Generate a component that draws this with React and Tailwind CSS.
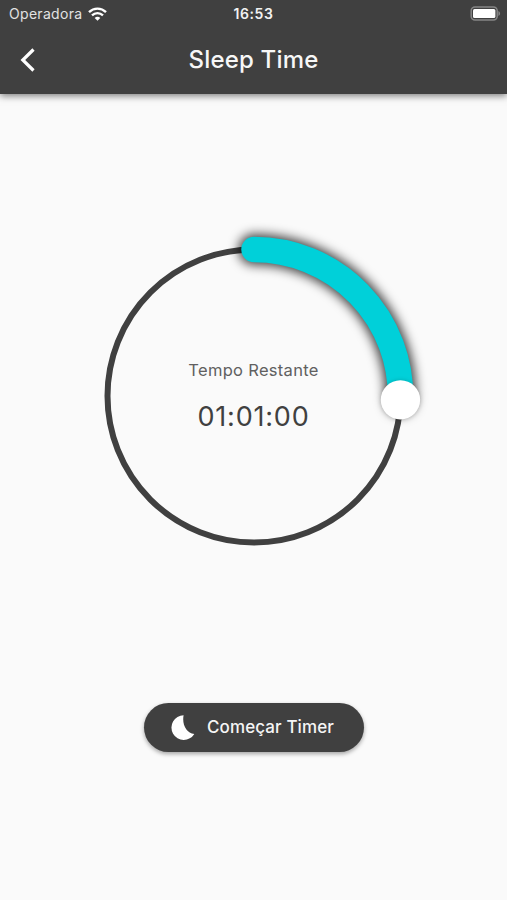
import { useState } from "react";

const TOTAL_MINUTES = 240;
const CENTER = 170;
const RADIUS = 146.5;

const WifiIcon = () => (
  <svg className="w-[19px] h-[14px]" viewBox="0 0 19 14" fill="none" stroke="#ffffff" strokeWidth="2.4">
    <path d="M1 5.1C5.8.5 13.2.5 18 5.1" />
    <path d="M4 8.4c3.200-3 7.800-3 11 0" />
    <path d="M9.5 13.7 6.7 10.9c1.600-1.500 4-1.500 5.600 0Z" fill="#ffffff" stroke="none" />
  </svg>
);

const BatteryIcon = () => (
  <svg className="w-[31px] h-[15px]" viewBox="0 0 31 15" fill="none">
    <rect x="1.2" y="1" width="26" height="13" rx="3.8" stroke="#858585" strokeWidth="1.5" />
    <rect x="3" y="3" width="22.4" height="9" rx="1.5" fill="#ffffff" />
    <path d="M28.400 5v5c1-.400 1.700-1.300 1.700-2.500S29.400 5.400 28.400 5Z" fill="#858585" />
  </svg>
);

const StatusBar = () => (
  <div className="grid grid-cols-3 items-center h-[27px] px-[6px] text-[14px] leading-none">
    <div className="flex items-center gap-[6px] pl-[3px] text-[#e2e2e2]">
      <span className="tracking-[0.3px]">Operadora</span>
      <WifiIcon />
    </div>
    <span className="text-center font-semibold tracking-[0.6px] text-[#f2f2f2]">16:53</span>
    <div className="flex justify-end">
      <BatteryIcon />
    </div>
  </div>
);

const Header = () => (
  <header className="h-[94px] shrink-0 bg-[#404040] text-white shadow-[0_2px_7px_rgba(0,0,0,0.5)]">
    <StatusBar />
    <div className="grid grid-cols-[60px_1fr_60px] items-center h-[66px]">
      <button className="pl-5" aria-label="Voltar">
        <svg className="w-4 h-6" viewBox="0 0 16 24" fill="none" stroke="currentColor" strokeWidth="3.2">
          <path d="M13.5 1.500 2.800 12l10.700 10.500" />
        </svg>
      </button>
      <h1 className="text-center text-[24px] font-medium tracking-[0.2px] text-[#f7f7f7]">Sleep Time</h1>
    </div>
  </header>
);

// Circular slider, the arc starts at 12 o'clock and runs clockwise
const Dial = ({ minutes }) => {
  const angle = (minutes / TOTAL_MINUTES) * 2 * Math.PI;
  const x = CENTER + RADIUS * Math.sin(angle);
  const y = CENTER - RADIUS * Math.cos(angle);
  const large = angle > Math.PI ? 1 : 0;
  const arc = `M${CENTER} ${CENTER - RADIUS}A${RADIUS} ${RADIUS} 0 ${large} 1 ${x} ${y}`;
  const hh = String(Math.floor(minutes / 60)).padStart(2, "0");
  const mm = String(minutes % 60).padStart(2, "0");

  return (
    <div className="relative w-[340px] h-[340px]">
      <svg className="w-full h-full overflow-visible" viewBox="0 0 340 340" fill="none">
        <defs>
          <filter id="arcShadow" x="-25%" y="-25%" width="150%" height="150%">
            <feGaussianBlur stdDeviation="5.5" />
          </filter>
          <filter id="knobShadow" x="-50%" y="-50%" width="200%" height="200%">
            <feGaussianBlur stdDeviation="2" />
          </filter>
        </defs>
        <circle cx={CENTER} cy={CENTER} r={RADIUS} stroke="#404040" strokeWidth="6" />
        <path d={arc} stroke="#000000" strokeOpacity="0.75" strokeWidth="31" strokeLinecap="round" filter="url(#arcShadow)" />
        <path d={arc} stroke="#00d0d9" strokeWidth="25.5" strokeLinecap="round" />
        <circle cx={x} cy={y} r="19.5" fill="#000000" fillOpacity="0.2" filter="url(#knobShadow)" />
        <circle cx={x} cy={y} r="19.7" fill="#ffffff" />
      </svg>
      <div className="absolute inset-0 flex flex-col items-center justify-center gap-[19px] pb-[2px]">
        <span className="text-[16.5px] leading-[24px] tracking-[0.3px] text-[#606060]">Tempo Restante</span>
        <span className="text-[27px] leading-[32px] tracking-[0.8px] text-[#404040]">{`${hh}:${mm}:00`}</span>
      </div>
    </div>
  );
};

const App = () => {
  const [minutes] = useState(61);

  return (
    <div className="flex flex-col h-screen bg-[#fafafa] font-['Inter',sans-serif]">
      <Header />
      <main className="flex flex-col items-center pt-[132px]">
        <Dial minutes={minutes} />
        <button className="mt-[137px] flex items-center justify-center gap-[12px] w-[220px] h-[49px] pr-[2px] rounded-full bg-[#404040] text-[#f5f5f5] shadow-[0_2px_4px_rgba(0,0,0,0.35)]">
          <svg className="w-6 h-[25px]" viewBox="0 0 24 25" fill="#ffffff">
            <path d="M12.600.300A12.300 12.300 0 1 0 23.300 18.900C15.500 18.200 10.800 9.500 12.600.300Z" />
          </svg>
          <span className="text-[17px] font-medium tracking-[0.1px]">Começar Timer</span>
        </button>
      </main>
    </div>
  );
};

export default App;
